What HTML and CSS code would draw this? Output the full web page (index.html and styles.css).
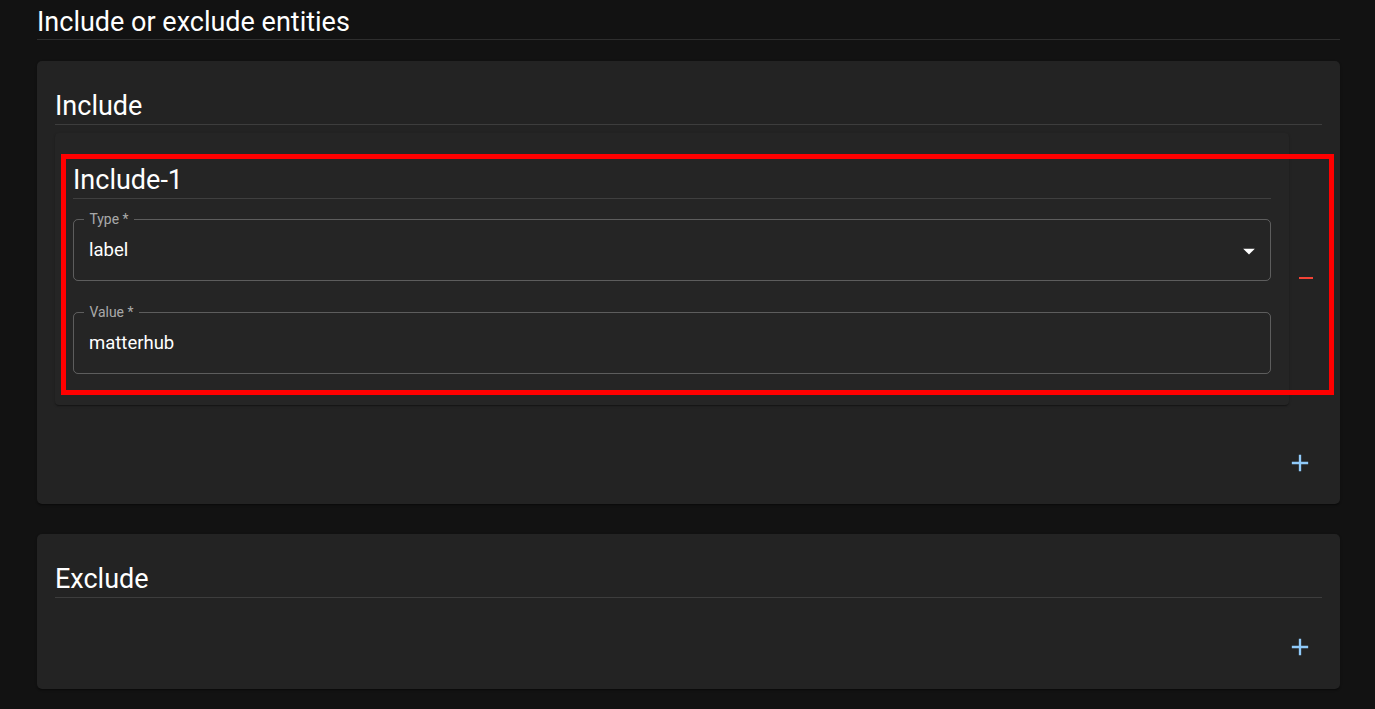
FILE: index.html
```html
<!DOCTYPE html>
<html lang="en">
<head>
<meta charset="utf-8">
<title>Include or exclude entities</title>
<link rel="stylesheet" href="styles.css">
</head>
<body>
<div class="page">
  <h2 class="title">Include or exclude entities</h2>
  <div class="divider"></div>

  <section class="card card-include">
    <h3 class="heading">Include</h3>
    <div class="divider"></div>
    <div class="list">
      <div class="item">
        <div class="inner-card">
          <h3 class="heading">Include-1</h3>
          <div class="divider"></div>
          <div class="field field-first">
            <span class="field-label">Type *</span>
            <span class="field-value">label</span>
            <svg class="arrow" viewBox="0 0 24 24" width="28" height="28"><path d="M7 10l5 5 5-5z" fill="#ffffff"/></svg>
          </div>
          <div class="field field-second">
            <span class="field-label">Value *</span>
            <span class="field-value">matterhub</span>
          </div>
        </div>
        <button class="icon-btn remove-btn" type="button" aria-label="Remove">
          <svg viewBox="0 0 24 24" width="24" height="24"><path d="M19 13H5v-2h14v2z" fill="#f44336"/></svg>
        </button>
        <div class="highlight"></div>
      </div>
    </div>
    <div class="add-row">
      <button class="icon-btn add-btn" type="button" aria-label="Add">
        <svg viewBox="0 0 24 24" width="28" height="28"><path d="M19 13h-6v6h-2v-6H5v-2h6V5h2v6h6v2z" fill="#90caf9"/></svg>
      </button>
    </div>
  </section>

  <section class="card card-exclude">
    <h3 class="heading">Exclude</h3>
    <div class="divider"></div>
    <div class="add-row">
      <button class="icon-btn add-btn" type="button" aria-label="Add">
        <svg viewBox="0 0 24 24" width="28" height="28"><path d="M19 13h-6v6h-2v-6H5v-2h6V5h2v6h6v2z" fill="#90caf9"/></svg>
      </button>
    </div>
  </section>
</div>
</body>
</html>
```

FILE: styles.css
```css
html, body {
  margin: 0;
  padding: 0;
  background: #121212;
  color: #ffffff;
  font-family: Roboto, "Liberation Sans", Arial, sans-serif;
}

.page {
  margin: 0 35px 0 37px;
  padding-top: 5px;
  padding-bottom: 20px;
}

.title,
.heading {
  margin: 0;
  font-size: 27px;
  line-height: 34px;
  font-weight: 400;
  color: #ffffff;
}

.divider {
  height: 1px;
  background: rgba(255, 255, 255, 0.12);
}

.title + .divider {
  margin-bottom: 21px;
}

.card {
  background: #232323;
  border-radius: 5px;
  padding: 27px 18px 18px;
  box-shadow: 0 2px 1px -1px rgba(0,0,0,0.2), 0 1px 1px 0 rgba(0,0,0,0.14), 0 1px 3px 0 rgba(0,0,0,0.12);
}

.card-include {
  padding-bottom: 17px;
}

.card-exclude {
  margin-top: 30px;
}

.card > .heading {
  padding-top: 1px;
  margin-bottom: 1px;
}

.list {
  display: flex;
  flex-direction: column;
}

.item {
  position: relative;
  display: flex;
  align-items: center;
  margin: 8px 0;
}

.inner-card {
  flex: 1;
  background: #252525;
  border-radius: 4px;
  padding: 29px 18px 31px;
  box-shadow: 0 2px 1px -1px rgba(0,0,0,0.2), 0 1px 1px 0 rgba(0,0,0,0.14), 0 1px 3px 0 rgba(0,0,0,0.12);
}

.inner-card > .heading {
  padding-top: 1px;
  margin-bottom: 1px;
}

.field {
  position: relative;
  height: 62px;
  box-sizing: border-box;
  border: 1px solid rgba(255, 255, 255, 0.26);
  border-radius: 5px;
  display: flex;
  align-items: center;
  padding: 0 15px;
}

.field-first {
  margin-top: 20px;
}

.field-second {
  margin-top: 31px;
}

.field-label {
  position: absolute;
  left: 10px;
  top: -8px;
  padding: 0 5.5px;
  background: #252525;
  font-size: 13.9px;
  line-height: 14px;
  color: rgba(255, 255, 255, 0.62);
}

.field-value {
  font-size: 18.5px;
  line-height: 26.6px;
  padding-top: 1px;
  color: #ffffff;
}

.arrow {
  position: absolute;
  right: 7px;
  top: 50%;
  margin-top: -13px;
  display: block;
}

.icon-btn {
  background: none;
  border: 0;
  padding: 0;
  margin: 0;
  display: flex;
  align-items: center;
  justify-content: center;
  cursor: pointer;
}

.icon-btn svg {
  display: block;
}

.remove-btn {
  width: 33px;
  height: 40px;
  margin-top: 18px;
  padding-left: 1px;
}

.add-row {
  display: flex;
  justify-content: flex-end;
  margin-top: 25px;
}

.card-include .add-row {
  margin-top: 26px;
}

.add-btn {
  width: 44px;
  height: 48px;
}

.highlight {
  position: absolute;
  left: 6px;
  top: 21px;
  width: 1273px;
  height: 241px;
  box-sizing: border-box;
  border: 5px solid #ff0000;
  pointer-events: none;
}
```
